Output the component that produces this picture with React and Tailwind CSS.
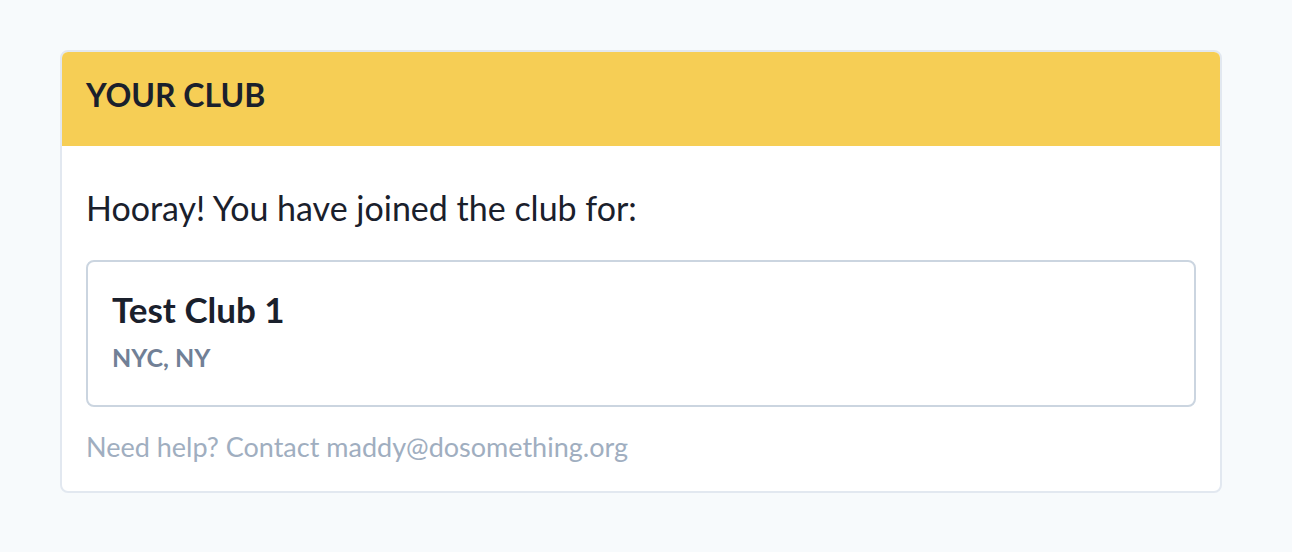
import React from 'react';

function ClubCard({ name, location }) {
  return (
    <div className="rounded-lg border-2 border-[#cbd5e0] bg-white px-6 pt-[27px] pb-[33px]">
      <h3 className="text-[35px] font-bold leading-[40px] text-[#1a202c]">{name}</h3>
      <p className="mt-[13px] text-[25px] font-bold leading-[30px] text-[#718096]">{location}</p>
    </div>
  );
}

export default function App() {
  return (
    <div className="min-h-screen bg-[#f7fafc] pl-[60px] pr-[70px] pt-[50px] font-['Lato',sans-serif]">
      <div className="overflow-hidden rounded-lg border-2 border-[#e2e8f0] bg-white">
        <div className="h-[94px] bg-[#f6ce55] px-6 pt-[27px]">
          <h2 className="text-[32px] font-bold uppercase leading-none text-[#1a202c]">Your Club</h2>
        </div>
        <div className="px-6 pt-[42px] pb-[26px]">
          <p className="text-[34px] leading-[40px] text-[#1a202c]">Hooray! You have joined the club for:</p>
          <div className="mt-[32px]">
            <ClubCard name="Test Club 1" location="NYC, NY" />
          </div>
          <p className="mt-[22px] text-[27px] leading-[36px] text-[#a0aec0]">
            Need help? Contact maddy@dosomething.org
          </p>
        </div>
      </div>
    </div>
  );
}
